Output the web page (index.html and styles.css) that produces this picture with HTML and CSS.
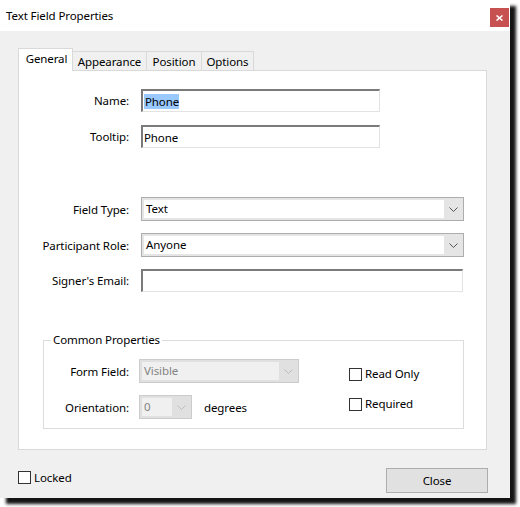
FILE: index.html
```
<!DOCTYPE html>
<html>
<head>
<meta charset="utf-8">
<link rel="stylesheet" href="styles.css">
</head>
<body>
<div class="window">
  <div class="titlebar">
    <span class="title">Text Field Properties</span>
    <span class="close-x"><svg width="7" height="6" viewBox="0 0 7 6"><path d="M0.5 0.5 L6.5 5.5 M6.5 0.5 L0.5 5.5" stroke="#fff" stroke-width="1.6" fill="none"/></svg></span>
  </div>
  <div class="content">
    <div class="tabs">
      <div class="tab active t-gen">General</div>
      <div class="tab t-app">Appearance</div>
      <div class="tab t-pos">Position</div>
      <div class="tab t-opt">Options</div>
    </div>
    <div class="panel">
      <div class="row r-name">
        <label class="lbl">Name:</label>
        <div class="input w-short"><span class="sel">Phone</span></div>
      </div>
      <div class="row r-tooltip">
        <label class="lbl">Tooltip:</label>
        <div class="input w-short">Phone</div>
      </div>
      <div class="row r-type">
        <label class="lbl">Field Type:</label>
        <div class="select w-long"><span class="sv">Text</span><span class="arrow"><svg width="9" height="5" viewBox="0 0 9 5"><path d="M0.5 0.5 L4.5 4.5 L8.5 0.5" stroke="#555" fill="none"/></svg></span></div>
      </div>
      <div class="row r-role">
        <label class="lbl">Participant Role:</label>
        <div class="select w-long"><span class="sv">Anyone</span><span class="arrow"><svg width="9" height="5" viewBox="0 0 9 5"><path d="M0.5 0.5 L4.5 4.5 L8.5 0.5" stroke="#555" fill="none"/></svg></span></div>
      </div>
      <div class="row r-email">
        <label class="lbl">Signer's Email:</label>
        <div class="input w-email"></div>
      </div>
      <fieldset class="group">
        <legend>Common Properties</legend>
        <div class="group-body">
          <div class="gcol">
            <div class="grow">
              <label class="glbl">Form Field:</label>
              <div class="dselect w-ff"><span class="dv">Visible</span><span class="darrow"><svg width="9" height="5" viewBox="0 0 9 5"><path d="M0.5 0.5 L4.5 4.5 L8.5 0.5" stroke="#bdbdbd" fill="none"/></svg></span></div>
            </div>
            <div class="grow">
              <label class="glbl">Orientation:</label>
              <div class="dselect w-or"><span class="dv">0</span><span class="darrow"><svg width="9" height="5" viewBox="0 0 9 5"><path d="M0.5 0.5 L4.5 4.5 L8.5 0.5" stroke="#bdbdbd" fill="none"/></svg></span></div>
              <span class="deg">degrees</span>
            </div>
          </div>
          <div class="ccol">
            <div class="check"><span class="box"></span><span>Read Only</span></div>
            <div class="check"><span class="box"></span><span>Required</span></div>
          </div>
        </div>
      </fieldset>
    </div>
    <div class="footer">
      <div class="check locked"><span class="box"></span><span>Locked</span></div>
      <div class="btn">Close</div>
    </div>
  </div>
</div>
</body>
</html>
```
FILE: styles.css
```
* { box-sizing: border-box; }
html, body { margin: 0; padding: 0; background: #fff; }
body {
  font-family: "Noto Sans", "Open Sans", sans-serif;
  font-size: 11.5px;
  letter-spacing: -0.1px;
  color: #000;
  width: 520px;
  height: 507px;
  overflow: hidden;
}
.window {
  width: 510px;
  height: 498px;
  background: #f0f0f0;
  box-shadow: 6px 6px 3px rgba(0,0,0,0.92);
  display: flex;
  flex-direction: column;
}
.titlebar {
  height: 31px;
  background: #fff;
  display: flex;
  justify-content: space-between;
  align-items: flex-start;
  padding: 0 1px 0 6px;
}
.title { margin-top: 8px; line-height: 16px; }
.close-x {
  margin-top: 8px;
  width: 19px;
  height: 19px;
  background: #c75050;
  display: flex;
  align-items: center;
  justify-content: center;
}
.close-x svg { display: block; }
.content {
  flex: 1;
  padding: 17px 23px 0 18px;
  display: flex;
  flex-direction: column;
}
.tabs {
  display: flex;
  align-items: flex-end;
  height: 23px;
  margin-bottom: -1px;
}
.tab {
  height: 20px;
  border: 1px solid #d9d9d9;
  border-bottom: none;
  border-left: none;
  line-height: 19px;
  background: #f0f0f0;
  text-align: center;
  white-space: nowrap;
}
.tab.active {
  position: relative;
  z-index: 1;
  height: 23px;
  background: #fff;
  border-left: 1px solid #d9d9d9;
  line-height: 20px;
}
.t-gen { width: 55px; padding-left: 2px; }
.t-app { width: 74px; }
.t-pos { width: 55px; }
.t-opt { width: 52px; }
.panel {
  height: 380px;
  background: #fff;
  border: 1px solid #d9d9d9;
  padding-top: 18px;
}
.row {
  display: flex;
  align-items: center;
  gap: 12px;
}
.lbl {
  width: 110px;
  text-align: right;
  flex: none;
}
.r-tooltip { margin-top: 13px; }
.r-type { margin-top: 49px; }
.r-role, .r-email { margin-top: 12px; }
.input {
  height: 23px;
  background: #fff;
  border: 1px solid #e3e3e3;
  border-top: 2px solid #7a7a7a;
  border-left: 2px solid #7a7a7a;
  padding-left: 1px;
  line-height: 19px;
  display: flex;
  align-items: center;
}
.w-short { width: 239px; }
.w-email { width: 322px; }
.w-long { width: 323px; }
.sel { background: #99c9ff; padding: 0 0 0 1px; line-height: 15px; }
.select {
  height: 24px;
  border: 1px solid #adadad;
  background: #e5e5e5;
  padding: 2px 0 2px 2px;
  display: flex;
}
.sv {
  flex: 1;
  background: #fff;
  padding-left: 2px;
  line-height: 18px;
}
.arrow, .darrow {
  width: 19px;
  display: flex;
  align-items: center;
  justify-content: center;
}
.arrow svg, .darrow svg { display: block; }
.group {
  margin: 40px 0 0 24px;
  width: 421px;
  border: 1px solid #dcdcdc;
  padding: 11px 0 9px 0;
  min-width: 0;
}
.group legend {
  margin-left: 7px;
  padding: 0 2px;
  line-height: 16px;
}
.group-body { display: flex; }
.gcol {
  display: flex;
  flex-direction: column;
  gap: 12px;
}
.grow {
  display: flex;
  align-items: center;
  gap: 10px;
}
.glbl {
  width: 85px;
  text-align: right;
  flex: none;
}
.dselect {
  height: 24px;
  border: 1px solid #cccccc;
  background: #e0e0e0;
  padding: 2px 0 2px 2px;
  display: flex;
}
.dv {
  flex: 1;
  background: #f0f0f0;
  color: #838383;
  padding-left: 2px;
  line-height: 18px;
}
.w-ff { width: 160px; }
.w-or { width: 53px; }
.deg { margin-left: 2px; }
.ccol {
  margin-left: 50px;
  padding-top: 7px;
  display: flex;
  flex-direction: column;
  gap: 14px;
}
.check {
  display: flex;
  align-items: center;
  line-height: 16px;
}
.box {
  width: 13px;
  height: 13px;
  border: 1px solid #333;
  background: #fff;
  margin-right: 3px;
  flex: none;
}
.footer {
  display: flex;
  justify-content: space-between;
  align-items: center;
  margin-top: 18px;
  margin-right: -1px;
}
.locked { margin-top: -6px; }
.btn {
  width: 102px;
  height: 25px;
  border: 1px solid #adadad;
  background: #e1e1e1;
  text-align: center;
  line-height: 23px;
}
```
